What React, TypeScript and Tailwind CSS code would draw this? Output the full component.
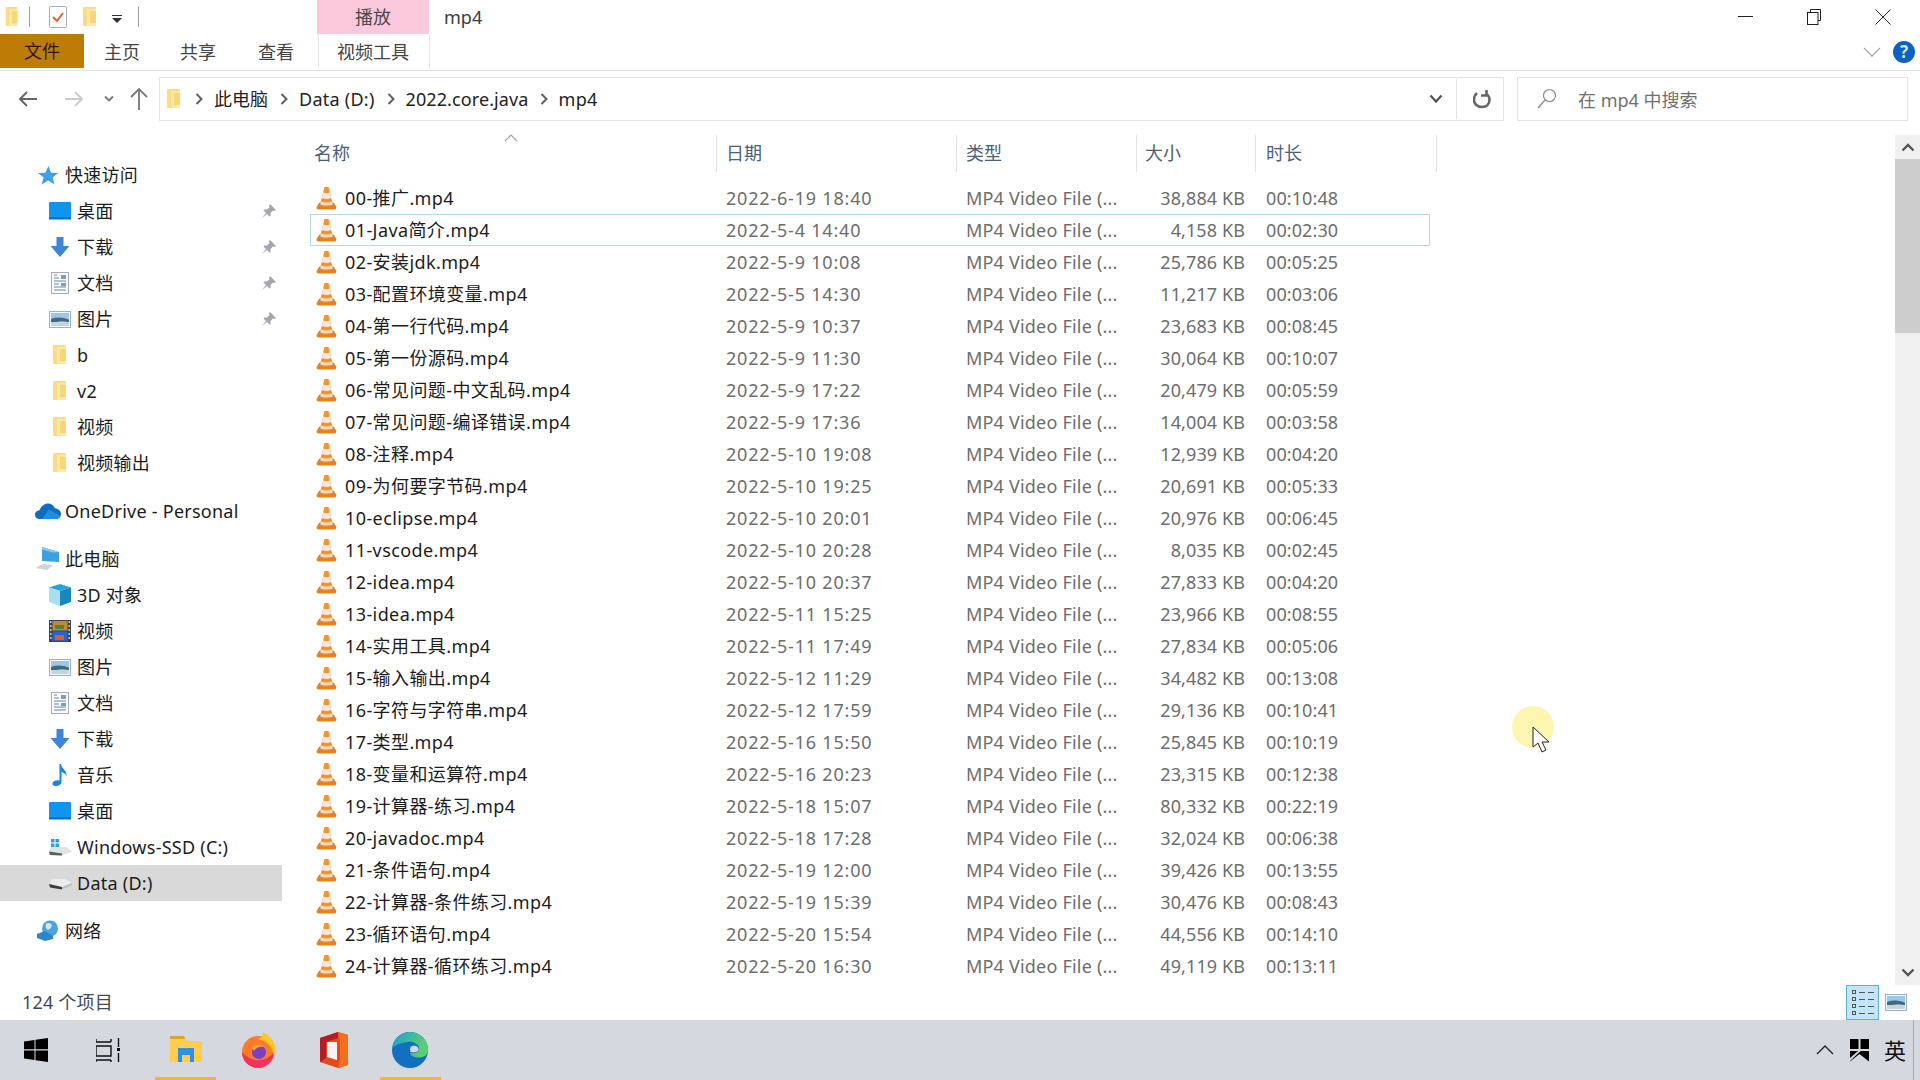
import React from "react";

const files: [string, string, string, string][] = [
  ["00-推广.mp4", "2022-6-19 18:40", "38,884 KB", "00:10:48"],
  ["01-Java简介.mp4", "2022-5-4 14:40", "4,158 KB", "00:02:30"],
  ["02-安装jdk.mp4", "2022-5-9 10:08", "25,786 KB", "00:05:25"],
  ["03-配置环境变量.mp4", "2022-5-5 14:30", "11,217 KB", "00:03:06"],
  ["04-第一行代码.mp4", "2022-5-9 10:37", "23,683 KB", "00:08:45"],
  ["05-第一份源码.mp4", "2022-5-9 11:30", "30,064 KB", "00:10:07"],
  ["06-常见问题-中文乱码.mp4", "2022-5-9 17:22", "20,479 KB", "00:05:59"],
  ["07-常见问题-编译错误.mp4", "2022-5-9 17:36", "14,004 KB", "00:03:58"],
  ["08-注释.mp4", "2022-5-10 19:08", "12,939 KB", "00:04:20"],
  ["09-为何要字节码.mp4", "2022-5-10 19:25", "20,691 KB", "00:05:33"],
  ["10-eclipse.mp4", "2022-5-10 20:01", "20,976 KB", "00:06:45"],
  ["11-vscode.mp4", "2022-5-10 20:28", "8,035 KB", "00:02:45"],
  ["12-idea.mp4", "2022-5-10 20:37", "27,833 KB", "00:04:20"],
  ["13-idea.mp4", "2022-5-11 15:25", "23,966 KB", "00:08:55"],
  ["14-实用工具.mp4", "2022-5-11 17:49", "27,834 KB", "00:05:06"],
  ["15-输入输出.mp4", "2022-5-12 11:29", "34,482 KB", "00:13:08"],
  ["16-字符与字符串.mp4", "2022-5-12 17:59", "29,136 KB", "00:10:41"],
  ["17-类型.mp4", "2022-5-16 15:50", "25,845 KB", "00:10:19"],
  ["18-变量和运算符.mp4", "2022-5-16 20:23", "23,315 KB", "00:12:38"],
  ["19-计算器-练习.mp4", "2022-5-18 15:07", "80,332 KB", "00:22:19"],
  ["20-javadoc.mp4", "2022-5-18 17:28", "32,024 KB", "00:06:38"],
  ["21-条件语句.mp4", "2022-5-19 12:00", "39,426 KB", "00:13:55"],
  ["22-计算器-条件练习.mp4", "2022-5-19 15:39", "30,476 KB", "00:08:43"],
  ["23-循环语句.mp4", "2022-5-20 15:54", "44,556 KB", "00:14:10"],
  ["24-计算器-循环练习.mp4", "2022-5-20 16:30", "49,119 KB", "00:13:11"],
];

function Vlc() {
  return (
    <svg width="21" height="24" viewBox="0 0 21 24" className="shrink-0">
      <path d="M0.5 21 L3.5 16.5 H17.5 L20.5 21 Q20.5 23.5 18.5 23.5 H2.5 Q0.5 23.5 0.5 21Z" fill="#e8801c" />
      <path d="M8.5 1 H12.5 L17 19 Q10.5 22 4 19Z" fill="#f5922a" />
      <path d="M7.2 6.5 Q10.5 8 13.8 6.5 L15.2 12 Q10.5 14 5.8 12Z" fill="#efe9e2" />
      <path d="M5 15.5 Q10.5 17.5 16 15.5 L16.8 18.4 Q10.5 20.6 4.2 18.4Z" fill="#f0ddca" />
    </svg>
  );
}

function Folder() {
  return (
    <svg width="16" height="22" viewBox="0 0 16 22" className="shrink-0">
      <rect x="1" y="1" width="13" height="19" rx="1" fill="#fbdb84" />
      <rect x="5" y="3" width="9" height="17" fill="#fde8ac" />
      <rect x="8" y="5" width="6" height="12" fill="#f8d777" />
    </svg>
  );
}

function Pin() {
  return (
    <svg width="16" height="16" viewBox="0 0 16 16">
      <path d="M9 1 L15 7 L13.5 8 L12 7.5 L9.5 10 L9.5 13 L8.5 13.5 L2.5 7.5 L3 6.5 L6 6.5 L8.5 4 L8 2.5Z" fill="#a3a7ad" />
      <path d="M5 10 L1 15 L6 11Z" fill="#a3a7ad" />
    </svg>
  );
}

function Desktop() {
  return (
    <svg width="22" height="18" viewBox="0 0 22 18"><rect x="0" y="0" width="22" height="17" rx="1" fill="#0f94f0" /><rect x="0" y="15.5" width="22" height="2" fill="#0a6cc0" /></svg>
  );
}
function Download() {
  return (
    <svg width="20" height="20" viewBox="0 0 20 20"><path d="M6.5 0 H13.5 V9 H19.5 L10 20 L0.5 9 H6.5Z" fill="#3b86d8" /></svg>
  );
}
function Doc() {
  return (
    <svg width="18" height="22" viewBox="0 0 18 22">
      <rect x="0.5" y="0.5" width="17" height="21" fill="#fdfdfd" stroke="#a4aeb8" />
      <path d="M3 3 L6 3 M3 6 H8 M3 9 H15 M3 12 H8 M3 15 H15 M3 18 H15" stroke="#5f86ad" strokeWidth="1.2" />
      <path d="M10 3 H15 V7 H10Z M10 11 H15 V14 H10Z" fill="#7b9dbf" />
    </svg>
  );
}
function Pic() {
  return (
    <svg width="22" height="17" viewBox="0 0 22 17">
      <rect x="0.5" y="0.5" width="21" height="16" fill="#f5f7fa" stroke="#9cb0c6" />
      <rect x="2" y="2" width="18" height="6" fill="#9ec6ea" />
      <path d="M2 8 Q10 5 20 8.5 V11 Q10 9.5 2 12Z" fill="#3f6a7c" />
      <rect x="2" y="11" width="18" height="4" fill="#c4d5dd" />
    </svg>
  );
}
function Video() {
  return (
    <svg width="22" height="22" viewBox="0 0 22 22">
      <rect width="22" height="22" fill="#3a4452" />
      <rect x="3.5" y="1" width="15" height="9.5" fill="#c08a30" />
      <rect x="3.5" y="11.5" width="15" height="9.5" fill="#2a62d6" />
      <path d="M6 5 H15 V9 H6Z" fill="#3f8a3c" />
      <path d="M6 15 H15 V20 H6Z" fill="#e05b2c" />
      <path d="M1 2 H2.5 M1 6 H2.5 M1 10 H2.5 M1 14 H2.5 M1 18 H2.5 M19.5 2 H21 M19.5 6 H21 M19.5 10 H21 M19.5 14 H21 M19.5 18 H21" stroke="#e8eef5" strokeWidth="1.4" />
    </svg>
  );
}
function Cube() {
  return (
    <svg width="22" height="22" viewBox="0 0 22 22">
      <path d="M11 0 L22 3.5 L11 7 L0 3.5Z" fill="#2b9fd8" />
      <path d="M0 3.5 L11 7 V22 L0 18Z" fill="#a6e0f0" />
      <path d="M22 3.5 L11 7 V22 L22 18Z" fill="#1787c0" />
    </svg>
  );
}
function Music() {
  return (
    <svg width="18" height="22" viewBox="0 0 18 22">
      <path d="M8.5 0 H10 C10.5 5 16.5 6 15.5 13 C15 9.5 12.5 8.5 10.5 8 V18 C10.5 20.5 7.5 22 4.5 22 C2 22 1 20.5 1.5 19 C2.2 17 5.5 15.5 8.5 16.5Z" fill="#1f85dc" />
    </svg>
  );
}
function SsdDrive() {
  return (
    <svg width="24" height="18" viewBox="0 0 24 18">
      <path d="M3 9 H18 L24 13.5 L14 17.5 L2 17 L1 13Z" fill="#dfe3e4" />
      <path d="M1 13.5 L14 15.5 L14 17.5 L2 17Z" fill="#555f66" />
      <path d="M3 1 H6.5 V4.5 H3Z M7.5 1 H11 V4.5 H7.5Z M3 5.5 H6.5 V9 H3Z M7.5 5.5 H11 V9 H7.5Z" fill="#27a3dc" />
    </svg>
  );
}
function DataDrive() {
  return (
    <svg width="24" height="14" viewBox="0 0 24 14">
      <path d="M4 3 H18 L24 7 L14 11 L1 8Z" fill="#ececec" />
      <path d="M1 8 L14 11 L14 13.5 L2 11.5Z" fill="#3d3d3d" />
      <path d="M14 11 L24 7 V9 L14 13.5Z" fill="#bdbdbd" />
    </svg>
  );
}
function Star() {
  return (
    <svg width="20" height="19" viewBox="0 0 20 19"><path d="M10.5 0 L13 6.8 L20 7 L14.6 11.4 L16.5 18.5 L10.2 14.4 L3.7 18.5 L5.6 11.4 L0 7 L7.4 6.8Z" fill="#3ea0e8" /></svg>
  );
}
function Cloud() {
  return (
    <svg width="26" height="16" viewBox="0 0 26 16">
      <path d="M5 16 C1 16 0 13.5 0 11.5 C0 9 2 7.5 4.5 7.3 C6 3 9.5 0.5 13 0.5 C16.5 0.5 19 3 20 5.5 C23.5 5.5 26 8 26 11 C26 14 23.5 16 21 16Z" fill="#0f6cc4" />
      <path d="M7 16 L14 6.5 L25.5 13 C25 15 23 16 21 16Z" fill="#1c8fe0" />
    </svg>
  );
}
function Pc() {
  return (
    <svg width="26" height="24" viewBox="0 0 26 24">
      <path d="M7 0 L24 5 V15 L7 14Z" fill="#3aa3de" />
      <path d="M7 0 L24 5 L18 5.5 L7 2.5Z" fill="#8ccbec" />
      <path d="M0 21 L8 17 L18 18 L12 23 Z" fill="#d0d4d8" />
    </svg>
  );
}
function Net() {
  return (
    <svg width="22" height="22" viewBox="0 0 22 22">
      <circle cx="13" cy="8.5" r="8" fill="#4aa3df" />
      <path d="M9 3.5 Q13 2 15 5 Q14 9 10.5 10 Q8 8 9 3.5Z" fill="#d4e9f5" />
      <path d="M0 14 L8 11 L16 16 L16 19 L8 21 L0 18Z" fill="#2d86cc" />
    </svg>
  );
}

type Nav = { label: string; icon: React.ReactNode; pin?: boolean; top?: boolean; gap?: boolean; sel?: boolean };
const nav: Nav[] = [
  { label: "快速访问", icon: <Star />, top: true },
  { label: "桌面", icon: <Desktop />, pin: true },
  { label: "下载", icon: <Download />, pin: true },
  { label: "文档", icon: <Doc />, pin: true },
  { label: "图片", icon: <Pic />, pin: true },
  { label: "b", icon: <Folder /> },
  { label: "v2", icon: <Folder /> },
  { label: "视频", icon: <Folder /> },
  { label: "视频输出", icon: <Folder /> },
  { label: "OneDrive - Personal", icon: <Cloud />, top: true, gap: true },
  { label: "此电脑", icon: <Pc />, top: true, gap: true },
  { label: "3D 对象", icon: <Cube /> },
  { label: "视频", icon: <Video /> },
  { label: "图片", icon: <Pic /> },
  { label: "文档", icon: <Doc /> },
  { label: "下载", icon: <Download /> },
  { label: "音乐", icon: <Music /> },
  { label: "桌面", icon: <Desktop /> },
  { label: "Windows-SSD (C:)", icon: <SsdDrive /> },
  { label: "Data (D:)", icon: <DataDrive />, sel: true },
  { label: "网络", icon: <Net />, top: true, gap: true },
];

function Crumb() {
  return (
    <svg width="10" height="14" viewBox="0 0 10 14" className="mx-[10px] shrink-0"><path d="M2.5 2 L7.5 7 L2.5 12" fill="none" stroke="#5f5f5f" strokeWidth="2" /></svg>
  );
}

function Arrow({ d, color }: { d: string; color: string }) {
  return (
    <svg width="20" height="20" viewBox="0 0 20 20" className="shrink-0"><path d={d} fill="none" stroke={color} strokeWidth="2" /></svg>
  );
}

export default function App() {
  return (
    <div className="relative flex h-[1080px] w-[1920px] flex-col overflow-hidden bg-white text-[18px] text-[#1c1c1c]" style={{ fontFamily: '"Noto Sans","Noto Sans CJK SC",sans-serif' }}>
      {/* title */}
      <div className="flex h-[34px] items-center">
        <div className="ml-[4px] scale-x-90"><Folder /></div>
        <div className="ml-[9px] h-[20px] w-px bg-[#a0a0a0]" />
        <svg width="20" height="24" viewBox="0 0 20 24" className="ml-[18px]"><rect x="1.5" y="1.5" width="17" height="21" rx="1" fill="#fff" stroke="#aab0b8" /><path d="M5 12 L9 16 L15 8" fill="none" stroke="#e2622b" strokeWidth="2" /></svg>
        <div className="ml-[14px]"><Folder /></div>
        <svg width="10" height="10" viewBox="0 0 10 10" className="ml-[14px] mt-[4px]"><path d="M0 1 H10 V2 H0Z M0 4 H10 L5 9Z" fill="#333" /></svg>
        <div className="ml-[16px] h-[20px] w-px bg-[#a0a0a0]" />
        <div className="ml-[178px] flex h-[34px] w-[112px] items-center justify-center bg-[#fcc8dc] text-[#4a4a4a]">播放</div>
        <div className="ml-[15px] text-[#3c3c3c]">mp4</div>
        <div className="flex-1" />
        <div className="mb-[2px] mr-[54px] h-px w-[15px] bg-[#222]" />
        <svg width="14" height="16" viewBox="0 0 14 16" className="mr-[54px]"><path d="M3.5 3 V0.5 H13.5 V11.5 H11" fill="none" stroke="#222" /><rect x="0.5" y="3.5" width="10.5" height="12" fill="#fff" stroke="#222" /></svg>
        <svg width="16" height="16" viewBox="0 0 16 16" className="mr-[29px]"><path d="M0.5 0.5 L15.5 15.5 M15.5 0.5 L0.5 15.5" stroke="#222" /></svg>
      </div>
      {/* ribbon tabs */}
      <div className="flex h-[37px] items-start border-b border-[#e3e3e3]">
        <div className="flex h-[34px] w-[84px] items-center justify-center bg-[#bd7c06] pt-px text-[#2a1a00]">文件</div>
        <div className="flex h-[34px] w-[76px] items-center justify-center pt-[3px] text-[#444]">主页</div>
        <div className="flex h-[34px] w-[76px] items-center justify-center pt-[3px] text-[#444]">共享</div>
        <div className="mr-[2px] flex h-[34px] w-[80px] items-center justify-center pt-[3px] text-[#444]">查看</div>
        <div className="flex h-[34px] w-[112px] items-center justify-center border-x border-[#e8e8e8] pr-[2px] pt-[3px] text-[#444]">视频工具</div>
        <div className="flex-1" />
        <svg width="18" height="10" viewBox="0 0 18 10" className="mr-[12px] mt-[13px]"><path d="M1 1 L9 9 L17 1" fill="none" stroke="#a8a8a8" strokeWidth="1.3" /></svg>
        <div className="mr-[5px] mt-[7px] flex h-[22px] w-[22px] items-center justify-center rounded-full bg-[#0c62c0] text-[17px] font-bold text-[#cfe4fb]">?</div>
      </div>
      {/* address */}
      <div className="flex h-[64px] items-start pt-[6px]">
        <div className="flex h-[44px] w-[159px] items-center pl-[18px]">
          <Arrow d="M19 10 H2 M9 3 L2 10 L9 17" color="#666" />
          <div className="w-[26px]" />
          <Arrow d="M1 10 H18 M11 3 L18 10 L11 17" color="#ccc" />
          <svg width="10" height="8" viewBox="0 0 10 8" className="ml-[20px]"><path d="M1 1.5 L5 5.5 L9 1.5" fill="none" stroke="#777" strokeWidth="1.8" /></svg>
          <svg width="20" height="24" viewBox="0 0 20 24" className="ml-[15px]"><path d="M10 23 V2 M2 10 L10 2 L18 10" fill="none" stroke="#777" strokeWidth="1.8" /></svg>
        </div>
        <div className="flex h-[44px] w-[1345px] items-center border border-[#e3e3e3] pl-[6px] text-[#222]">
          <Folder />
          <div className="ml-[2px]" />
          <Crumb />
          <span>此电脑</span>
          <div className="ml-px" />
          <Crumb />
          <span className="tracking-[0.25px]">Data (D:)</span>
          <div className="ml-[1px]" />
          <Crumb />
          <span className="tracking-[0.1px]">2022.core.java</span>
          <Crumb />
          <span className="tracking-[0.3px]">mp4</span>
          <div className="flex-1" />
          <svg width="14" height="10" viewBox="0 0 14 10" className="mr-[13px]"><path d="M1.5 1.5 L7 7.5 L12.5 1.5" fill="none" stroke="#555" strokeWidth="2.2" /></svg>
          <div className="h-[40px] w-px bg-[#e3e3e3]" />
          <svg width="18" height="20" viewBox="0 0 18 20" className="ml-[16px] mr-[12px]"><path d="M4 4 C1.5 6 1 8 1 11 C1 15 4.5 18 9 18 C13.5 18 16.5 15 16.5 11 C16.5 8 15.5 6 13 4.5 M13.5 1 V6.5 H8" fill="none" stroke="#666" strokeWidth="2.6" /></svg>
        </div>
        <div className="ml-[13px] flex h-[44px] w-[391px] items-center border border-[#e3e3e3] pl-[19px] text-[#707070]">
          <svg width="20" height="22" viewBox="0 0 20 22"><circle cx="12.5" cy="7.5" r="6" fill="none" stroke="#8a8a8a" strokeWidth="1.2" /><path d="M8 12 L1 20" stroke="#8a8a8a" strokeWidth="1.4" /></svg>
          <span className="ml-[21px] pt-[2px]">在 mp4 中搜索</span>
        </div>
      </div>
      {/* body */}
      <div className="flex h-[850px]">
        <div className="w-[282px] shrink-0 pt-[22px]">
          {nav.map((n, i) => (
            <div key={i} className={`flex h-[36px] items-center ${n.gap ? "mt-[12px]" : ""} ${n.sel ? "bg-[#d9d9d9]" : ""}`}>
              <div className={`flex shrink-0 items-center justify-center ${n.top ? "ml-[35px] w-[26px]" : "ml-[47px] w-[26px]"}`}>{n.icon}</div>
              <span className="ml-[4px] flex-1 whitespace-nowrap tracking-[0.25px]">{n.label}</span>
              {n.pin && <div className="mr-[5px]"><Pin /></div>}
            </div>
          ))}
        </div>
        <div className="relative w-[1613px] shrink-0">
          <div className="flex h-[37px] items-center text-[#4c607a]">
            <div className="flex h-full w-[435px] items-center border-r border-[#e5e5e5] pl-[32px]">名称</div>
            <div className="flex h-full w-[240px] items-center border-r border-[#e5e5e5] pl-[9px]">日期</div>
            <div className="flex h-full w-[180px] items-center border-r border-[#e5e5e5] pl-[9px]">类型</div>
            <div className="flex h-full w-[119px] items-center border-r border-[#e5e5e5] pl-[8px]">大小</div>
            <div className="flex h-full w-[181px] items-center border-r border-[#e5e5e5] pl-[10px]">时长</div>
          </div>
          <svg width="14" height="8" viewBox="0 0 14 8" className="absolute left-[222px] top-[-1px]"><path d="M1 7 L7 1 L13 7" fill="none" stroke="#9aa3ad" strokeWidth="1.2" /></svg>
          <div className="pl-[28px] pt-[10px]">
            {files.map((f, i) => (
              <div key={i} className={`flex h-[32px] w-[1120px] items-center ${i === 1 ? "outline outline-1 -outline-offset-1 outline-[#b5d8e3]" : ""}`}>
                <div className="ml-[6px] flex w-[29px] shrink-0"><Vlc /></div>
                <div className="w-[381px] shrink-0 whitespace-nowrap tracking-[0.4px]">{f[0]}</div>
                <div className="w-[240px] shrink-0 whitespace-nowrap tracking-[0.8px] text-[#6d6d6d]">{f[1]}</div>
                <div className="w-[178px] shrink-0 whitespace-nowrap tracking-[0.2px] text-[#6d6d6d]">MP4 Video File (...</div>
                <div className="w-[101px] shrink-0 whitespace-nowrap text-right tracking-[0.1px] text-[#6d6d6d]">{f[2]}</div>
                <div className="ml-[21px] whitespace-nowrap tracking-[0.1px] text-[#6d6d6d]">{f[3]}</div>
              </div>
            ))}
          </div>
        </div>
        <div className="flex w-[25px] shrink-0 flex-col bg-[#f0f0f0]">
          <div className="flex h-[24px] items-center justify-center">
            <svg width="14" height="10" viewBox="0 0 14 10"><path d="M1.5 8.5 L7 3 L12.5 8.5" fill="none" stroke="#555" strokeWidth="2.4" /></svg>
          </div>
          <div className="h-[174px] bg-[#cdcdcd]" />
          <div className="flex-1" />
          <div className="flex h-[24px] items-center justify-center">
            <svg width="14" height="10" viewBox="0 0 14 10"><path d="M1.5 1.5 L7 7 L12.5 1.5" fill="none" stroke="#555" strokeWidth="2.4" /></svg>
          </div>
        </div>
      </div>
      {/* status */}
      <div className="flex h-[35px] items-center pl-[22px] text-[#3f4a56]">
        <span className="tracking-[0.2px]">124 个项目</span>
        <div className="flex-1" />
        <div className="flex h-[35px] w-[33px] flex-col items-center justify-center gap-[3px] border border-[#5fb0d8] bg-[#c4e5f7]">
          {[0, 1, 2, 3].map((k) => (
            <div key={k} className="flex items-center gap-[3px]">
              <div className="h-[4px] w-[4px] border border-[#555]" />
              <div className="h-px w-[6px] bg-[#555]" />
              <div className="h-px w-[6px] bg-[#555]" />
            </div>
          ))}
        </div>
        <div className="ml-[6px] mr-[13px]">
          <Pic />
        </div>
      </div>
      {/* taskbar */}
      <div className="flex h-[60px] items-center bg-[#d5d9df]">
        <svg width="24" height="24" viewBox="0 0 24 24" className="ml-[24px]"><path d="M0 3.5 L10.5 2 V11.3 H0Z M11.5 1.8 L24 0 V11.3 H11.5Z M0 12.5 H10.5 V22 L0 20.5Z M11.5 12.5 H24 V24 L11.5 22.2Z" fill="#000" /></svg>
        <svg width="24" height="24" viewBox="0 0 24 24" className="ml-[48px]"><path d="M0 1 V4 M0 4 H15 M15 1 V4 M0 8 H15 V18 H0Z M0 22 H15 M0 22 V24 M15 22 V24 M22.5 0 V9 M22.5 15 V24" fill="none" stroke="#111" strokeWidth="1.4" /><rect x="21" y="10" width="3" height="3" fill="#111" /></svg>
        <div className="relative ml-[35px] flex h-[60px] w-[61px] items-center justify-center">
          <svg width="32" height="28" viewBox="0 0 32 28"><path d="M0 0 H14 L17 5 H32 V26 H0Z" fill="#ffcd52" /><path d="M0 0 H14 L15 3 H0Z" fill="#d9a32c" /><path d="M8 12 H24 V26 H20 V19 H12 V26 H8Z" fill="#2f8fe0" /></svg>
          <div className="absolute bottom-0 left-0 right-0 h-[3px] bg-[#fdb714]" />
        </div>
        <svg width="36" height="36" viewBox="0 0 36 36" className="ml-[25px]">
          <circle cx="17" cy="20" r="16" fill="#ff7a2a" />
          <path d="M1 20 A16 16 0 0 0 33 20 C25 31 10 31 1 20Z" fill="#f0325f" />
          <path d="M22 0 C33 6 37 15 33 24 C31 14 26 9 17 7 C20 6 22 4 22 0Z" fill="#ffc62c" />
          <circle cx="18" cy="20" r="7" fill="#7b3fc4" />
          <path d="M11 16 C14 12 20 12 24 15 C20 14 15 15 13 19Z" fill="#ffa02a" />
        </svg>
        <svg width="30" height="36" viewBox="0 0 30 36" className="ml-[43px]">
          <path d="M0 6 L18 0 L28 3 V33 L18 36 L0 30Z" fill="#e8481c" />
          <path d="M18 0 L28 3 V33 L18 36 L20 28 V8Z" fill="#f2701e" />
          <path d="M0 6 L18 0 V6 L6 10 V26 L0 30Z" fill="#b21e27" />
          <path d="M7 10 H17 V28 L7 25Z" fill="#f4f4f4" />
        </svg>
        <svg width="38" height="38" viewBox="0 0 38 38" className="ml-[41px]">
          <defs>
            <linearGradient id="edgeTop" x1="0" y1="0" x2="1" y2="0.3">
              <stop offset="0" stopColor="#1c9fd6" />
              <stop offset="1" stopColor="#5ad16f" />
            </linearGradient>
          </defs>
          <circle cx="19" cy="19" r="18" fill="#1270bf" />
          <path d="M1 17 C3 6 12 1 19 1 C29 1 37 9 37 19 C37 24 33 26.5 28 26.5 C24 26.5 20 25 19 22 C25 23 29 21 28 16 C26 12 21 10 16 11 C9 12 4 14 1 17Z" fill="url(#edgeTop)" />
          <path d="M21 15 C25 14 28 16 27.5 19 C27 21 23 22 19.5 21 C18.5 18 19 16 21 15Z" fill="#d5d9df" />
        </svg>
        <div className="absolute bottom-0 left-[380px] h-[3px] w-[61px] bg-[#fdb714]" />
        <div className="flex-1" />
        <svg width="18" height="10" viewBox="0 0 18 10"><path d="M1 9 L9 1 L17 9" fill="none" stroke="#222" strokeWidth="1.4" /></svg>
        <svg width="19" height="23" viewBox="0 0 19 23" className="ml-[16px]"><path d="M0 0 H8.5 V10 H0Z M10.5 0 H19 V10 H10.5Z M0 12 H8 L0 19Z M0 22.5 L9.5 15 L19 22.5 V12 H11 L9.5 13 L0 22Z" fill="#000" /></svg>
        <span className="ml-[15px] text-[22px] leading-none text-[#111]">英</span>
        <div className="ml-[7px] mr-[6px] h-[60px] w-px bg-[#a8a8a8]" />
      </div>
      {/* presenter cursor overlay */}
      <div className="absolute left-[1512px] top-[706px] h-[42px] w-[42px] rounded-full bg-[#fcf6b0]" />
      <svg width="20" height="28" viewBox="0 0 20 28" className="absolute left-[1532px] top-[726px]"><path d="M1 1 V21 L6 17 L10 26 L14 24 L10 16 L17 16Z" fill="#fff" stroke="#222" strokeWidth="1" /></svg>
    </div>
  );
}
